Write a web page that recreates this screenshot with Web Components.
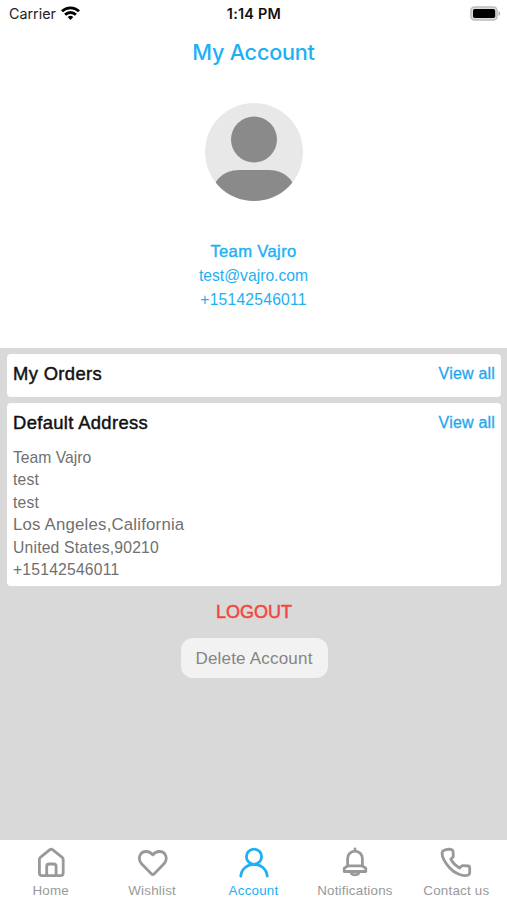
<!DOCTYPE html>
<html lang="en">
<head>
<meta charset="utf-8">
<title>My Account</title>
<style>
  body {
    margin: 0;
    font-family: "Liberation Sans", Arial, sans-serif;
    background: #d9d9d9;
  }
</style>
</head>
<body>
<account-screen></account-screen>

<script>
class StatusBar extends HTMLElement {
  constructor() {
    super();
    this.attachShadow({ mode: 'open' });
    this.shadowRoot.innerHTML = `
    <style>
    :host {
      display: grid;
      grid-template-columns: 1fr auto 1fr;
      align-items: center;
      height: 27px;
      padding: 0 6px 0 9px;
      font: 14.3px/28px Inter, sans-serif;
      color: #222;
    }

    .carrier {
      display: flex;
      align-items: center;
      gap: 5px;
    }

    .carrier svg {
      margin-bottom: 2px;
    }

    .time {
      font-weight: 600;
      font-size: 14.4px;
      letter-spacing: 0.25px;
      color: #111;
      padding-right: 2px;
    }

    .battery {
      justify-self: end;
      margin-bottom: 1px;
    }

    svg {
      display: block;
    }
    </style>
      <div class="carrier"><span>Carrier</span>
        <svg width="19" height="15" viewBox="0 0 19 15" fill="none" stroke="#000" stroke-width="2.8">
          <path d="M1 5.3a12.2 12.2 0 0 1 17 0"/>
          <path d="M4.1 8.7a7.7 7.7 0 0 1 10.8 0"/>
          <path d="M9.5 14l-2.8-2.9a4 4 0 0 1 5.6 0z" fill="#000" stroke="none"/>
        </svg>
      </div>
      <span class="time">1:14 PM</span>
      <svg class="battery" width="31" height="15" viewBox="0 0 31 15">
        <rect x=".9" y=".9" width="26.2" height="13.2" rx="3.8" fill="#ddd" stroke="#bdbdbd" stroke-width="1.5"/>
        <rect x="3" y="3" width="22.2" height="9" rx="1.8" fill="#000"/>
        <path d="M28.6 5v5a2.8 2.8 0 0 0 0-5z" fill="#aaa"/>
      </svg>
    `;
  }
}

class ProfileHeader extends HTMLElement {
  constructor() {
    super();
    this.attachShadow({ mode: 'open' });
    this.shadowRoot.innerHTML = `
    <style>
    :host {
      display: flex;
      flex-direction: column;
      align-items: center;
      height: 321px;
      background: #fff;
      color: #1eb0f3;
    }

    h1 {
      margin: 0;
      font: 500 21.6px/50px Inter, sans-serif;
      letter-spacing: -0.2px;
    }

    svg {
      display: block;
      margin: 26px 0 38px;
    }

    .name {
      font-size: 16.6px;
      line-height: 25px;
      letter-spacing: 0.35px;
      -webkit-text-stroke: 0.4px;
    }

    .line {
      font-size: 15.7px;
      line-height: 24.4px;
    }

    .phone {
      letter-spacing: 0.2px;
    }
    </style>
      <h1><slot name="title"></slot></h1>
      <svg width="98" height="98" viewBox="0 0 98 98">
        <defs><clipPath id="round"><circle cx="49" cy="49" r="49"/></clipPath></defs>
        <circle cx="49" cy="49" r="49" fill="#e8e8e8"/>
        <g clip-path="url(#round)" fill="#8a8a8a">
          <circle cx="49" cy="36.500" r="23"/>
          <path d="M6 98C6 78 18 67 34 67H64C80 67 92 78 92 98z"/>
        </g>
      </svg>
      <div class="name"><slot name="name"></slot></div>
      <div class="line"><slot name="email"></slot></div>
      <div class="line phone"><slot name="phone"></slot></div>
    `;
  }
}

class InfoCard extends HTMLElement {
  constructor() {
    super();
    this.attachShadow({ mode: 'open' });
    this.shadowRoot.innerHTML = `
    <style>
    :host {
      display: block;
      box-sizing: border-box;
      padding: 0 6px;
      border-radius: 4px;
      background: #fff;
    }

    header {
      display: flex;
      justify-content: space-between;
      height: 43px;
      line-height: 39px;
    }

    .title {
      font-size: 18.4px;
      letter-spacing: 0.35px;
      color: #111;
      -webkit-text-stroke: 0.45px;
    }

    .link {
      font-size: 16px;
      letter-spacing: 0.2px;
      color: #1ea7ef;
      -webkit-text-stroke: 0.3px;
    }

    .body {
      color: #707070;
      font-size: 15.7px;
      letter-spacing: 0.2px;
      line-height: 22.4px;
    }
    </style>
      <header>
        <span class="title">${this.getAttribute('heading')}</span>
        <span class="link">View all</span>
      </header>
      <div class="body"><slot></slot></div>
    `;
  }
}

class TabItem extends HTMLElement {
  constructor() {
    super();
    this.attachShadow({ mode: 'open' });
    this.shadowRoot.innerHTML = `
    <style>
    :host {
      flex: 1;
      display: flex;
      flex-direction: column;
      align-items: center;
      color: #999;
      font-size: 13.4px;
      letter-spacing: 0.2px;
      line-height: 16px;
      white-space: nowrap;
    }

    :host([active]) {
      color: #1eb0f3;
    }

    svg {
      display: block;
      margin: 7px 0 4px;
      fill: none;
      stroke: currentColor;
      stroke-width: 2.8;
      stroke-linecap: round;
      stroke-linejoin: round;
    }
    </style>
      <svg width="32" height="32" viewBox="0 0 32 32">${TabItem.icons[this.getAttribute('icon')]}</svg>
      <slot></slot>
    `;
  }
}

TabItem.icons = {
  home: '<path d="M4.400 12.500Q4.400 11.200 5.400 10.400L14.600 2.900Q16.200 1.700 17.800 2.900L27.200 10.400Q28.200 11.200 28.200 12.500V26Q28.200 28.700 25.500 28.700H7.100Q4.400 28.700 4.400 26z"/><path d="M11.700 28V19.500Q11.700 17 14.200 17H18.600Q21.100 17 21.100 19.500V28"/>',
  heart: '<path d="M16.800 27.500Q16.100 27.500 15.300 26.700L5.800 17C1.200 12.100 3.600 4.500 10.300 4.500C13.300 4.500 15.300 6 16.800 7.800C18.300 6 20.300 4.500 23.300 4.500C30 4.500 32.400 12.100 27.800 17L18.300 26.700Q17.500 27.500 16.800 27.500z"/>',
  user: '<circle cx="16" cy="9.700" r="7.600"/><path d="M2.800 29C3.600 21.800 9.200 17.400 16 17.400S28.400 21.800 29.200 29"/>',
  bell: '<path d="M16 1.800V4M8.600 19V11.500a7.400 7.400 0 0 1 14.800 0V19"/><path d="M8.500 18.800H23.500L26.800 21.300V24.500H5.200V21.300z"/><path d="M12 25.500a4.200 3.500 0 0 0 8 0"/>',
  phone: '<path d="M3.300 3.700Q7 1.700 11.500 2.500Q12.900 2.800 13 4.200L13.300 9Q13.300 10.200 12.200 10.900L10.800 12Q13.500 17.400 19.600 21L21.300 19.300Q22 18.500 23.200 18.600L28.300 19Q29.700 19.200 29.700 20.800V26Q29.700 27.500 28.200 28C23.500 30.200 14.500 26.500 9.300 20.500C4 14.500 1.600 9 2.200 5.200Q2.400 4.200 3.300 3.700z"/>'
};

class TabBar extends HTMLElement {
  constructor() {
    super();
    this.attachShadow({ mode: 'open' });
    this.shadowRoot.innerHTML = `
    <style>
    :host {
      display: flex;
      height: 60px;
      background: #fff;
    }
    </style>
      <slot></slot>
    `;
  }
}

class AccountScreen extends HTMLElement {
  constructor() {
    super();
    this.attachShadow({ mode: 'open' });
    this.shadowRoot.innerHTML = `
    <style>
    :host {
      display: flex;
      flex-direction: column;
      height: 900px;
      background: #d9d9d9;
    }

    status-bar {
      background: #fff;
    }

    main {
      flex: 1;
      display: flex;
      flex-direction: column;
      gap: 6px;
      padding: 6px 6px 0 7px;
    }

    .address {
      height: 183px;
    }

    .address div:nth-child(1) {
      margin-top: 1px;
      letter-spacing: 0;
    }

    .address div:nth-child(4) {
      font-size: 16.8px;
    }

    .actions {
      display: flex;
      flex-direction: column;
      align-items: center;
      gap: 5px;
    }

    .logout {
      font-size: 18px;
      line-height: 41px;
      color: #f4453e;
      -webkit-text-stroke: 0.5px;
    }

    .delete {
      box-sizing: border-box;
      width: 147px;
      height: 40px;
      border: 0;
      border-radius: 12px;
      background: #f2f2f2;
      color: #858585;
      font: 17px "Liberation Sans", Arial, sans-serif;
      letter-spacing: 0.2px;
      padding: 1px 0 0;
    }
    </style>
      <status-bar></status-bar>
      <profile-header>
        <span slot="title">My Account</span>
        <span slot="name">Team Vajro</span>
        <span slot="email">test@vajro.com</span>
        <span slot="phone">+15142546011</span>
      </profile-header>
      <main>
        <info-card heading="My Orders"></info-card>
        <info-card class="address" heading="Default Address">
          <div>Team Vajro</div>
          <div>test</div>
          <div>test</div>
          <div>Los Angeles,California</div>
          <div>United States,90210</div>
          <div>+15142546011</div>
        </info-card>
        <div class="actions">
          <span class="logout">LOGOUT</span>
          <button class="delete">Delete Account</button>
        </div>
      </main>
      <tab-bar>
        <tab-item icon="home">Home</tab-item>
        <tab-item icon="heart">Wishlist</tab-item>
        <tab-item icon="user" active>Account</tab-item>
        <tab-item icon="bell">Notifications</tab-item>
        <tab-item icon="phone">Contact us</tab-item>
      </tab-bar>
    `;
  }
}

customElements.define('status-bar', StatusBar);
customElements.define('profile-header', ProfileHeader);
customElements.define('info-card', InfoCard);
customElements.define('tab-item', TabItem);
customElements.define('tab-bar', TabBar);
customElements.define('account-screen', AccountScreen);
</script>
</body>
</html>
